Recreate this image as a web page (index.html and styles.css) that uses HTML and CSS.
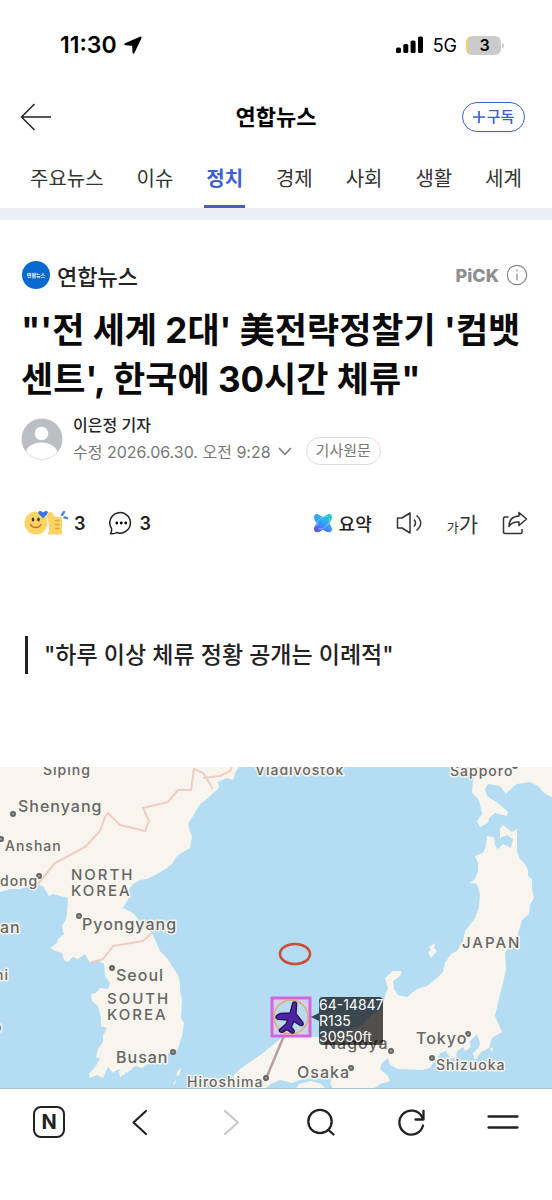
FILE: index.html
```html
<!DOCTYPE html>
<html lang="ko">
<head>
<meta charset="utf-8">
<meta name="viewport" content="width=device-width, initial-scale=1">
<title>연합뉴스</title>
<link rel="stylesheet" href="styles.css">
</head>
<body>
<div class="status">
  <div class="status-left">
    <span class="clock">11:30</span>
    <svg class="icon" width="18" height="18" viewBox="0 0 18 18"><path d="M16.500.6 1 7.300q-1.600 1 .2 2l7 .5.3 7q.7 1.600 1.900.1L17.600 2q.2-1.700-1.100-1.400z" fill="#000"/></svg>
  </div>
  <div class="status-right">
    <svg class="icon" width="28" height="18" viewBox="0 0 28 18"><rect x="0" y="11.500" width="5" height="5.500" rx="1.600"/><rect x="7.300" y="8" width="5" height="9" rx="1.600"/><rect x="14.600" y="4.500" width="5" height="12.500" rx="1.600"/><rect x="22" y="0.500" width="5" height="16.500" rx="1.600"/></svg>
    <span class="network">5G</span>
    <span class="battery">3</span>
  </div>
</div>

<header class="header">
  <button class="back" aria-label="뒤로"><svg class="icon" width="32" height="28" viewBox="0 0 32 28" fill="none" stroke="#222" stroke-width="1.500"><path d="M14.500 1 1.500 14l13 13M1.500 14H31"/></svg></button>
  <h2 class="header-title">연합뉴스</h2>
  <button class="subscribe"><svg class="icon" width="12" height="12" viewBox="0 0 12 12" stroke="#3c5fd0" stroke-width="1.700"><path d="M6 0v12M0 6h12"/></svg>구독</button>
</header>

<nav class="tabs">
  <a class="tab" href="#">주요뉴스</a>
  <a class="tab" href="#">이슈</a>
  <a class="tab tab-active" href="#">정치</a>
  <a class="tab" href="#">경제</a>
  <a class="tab" href="#">사회</a>
  <a class="tab" href="#">생활</a>
  <a class="tab" href="#">세계</a>
</nav>

<main>
  <article class="article">
    <div class="source">
      <span class="source-logo">연합뉴스</span>
      <span class="source-name">연합뉴스</span>
      <span class="pick">PiCK</span>
      <button aria-label="안내"><svg class="icon" width="22" height="22" viewBox="0 0 22 22" fill="none" stroke="#888" stroke-width="1.200"><circle cx="11" cy="11" r="9.700"/><path d="M11 9.500v7M11 5.500v1.700"/></svg></button>
    </div>
    <h1 class="headline">"'전 세계 2대' 美전략정찰기 '컴뱃<br>센트', 한국에 30시간 체류"</h1>
    <div class="byline">
      <svg class="icon" width="42" height="42" viewBox="0 0 42 42"><defs><clipPath id="face"><circle cx="21" cy="21" r="20"/></clipPath></defs><circle cx="21" cy="21" r="20.500" fill="#bbbec3"/><g clip-path="url(#face)" fill="#fff"><circle cx="20.500" cy="15.500" r="6.800"/><ellipse cx="20.500" cy="36" rx="16" ry="11.500"/></g></svg>
      <div class="byline-text">
        <div class="reporter">이은정 기자</div>
        <div class="date-row">
          <button class="date">수정 2026.06.30. 오전 9:28<svg class="icon" width="14" height="9" viewBox="0 0 14 9" fill="none" stroke="#777" stroke-width="1.500"><path d="m1 1 6 6.500L13 1"/></svg></button>
          <a class="original" href="#">기사원문</a>
        </div>
      </div>
    </div>
    <div class="actions">
      <button class="action">
        <svg class="icon" width="44" height="26" viewBox="0 0 44 26"><circle cx="12" cy="13" r="11.500" fill="#fcd466"/><ellipse cx="9" cy="9.500" rx="1.300" ry="2" fill="#433"/><ellipse cx="14.500" cy="9.500" rx="1.300" ry="2" fill="#433"/><path d="M6.500 14.500c2 4 8.500 4 10.500 0" fill="none" stroke="#c6732c" stroke-width="1.500" stroke-linecap="round"/><path d="m19 8.200-4.200-4.100C13 1.700 16 0 18 1.500l1 1 1.300-1c2-1.500 5 .2 3 2.600z" fill="#3a76e8"/><path d="M23.500 24.500c2-3 2-8 1-12C23.500 9 22.500 6 23.500 3.500q1.500-3 4.500-1c1.800 1.300 1.500 4 4 4.500h4.500q1.500 0 1.500 1.700V23q0 1.500-1.500 1.500z" fill="#fcd466"/><path d="M31 10.500h4.500M31 14.500h4.500M31 18.500h4.500" stroke="#e4a33c" stroke-width="1.300"/><path d="m38 5 2-3M40.500 7.500l3 .6" stroke="#4a86ec" stroke-width="2.400" stroke-linecap="round"/></svg>
        <span class="count">3</span>
      </button>
      <button class="action comments">
        <svg class="icon" width="24" height="24" viewBox="0 0 24 24"><path d="M2.500 17.500A10.300 10.300 0 1 1 7.500 21.500Q4.500 23.500 1.500 22.500 3 20.500 2.500 17.500z" fill="none" stroke="#222" stroke-width="1.500" stroke-linejoin="round"/><circle cx="7.800" cy="12" r="1.400"/><circle cx="12.300" cy="12" r="1.400"/><circle cx="16.800" cy="12" r="1.400"/></svg>
        <span class="count">3</span>
      </button>
      <button class="action summary">
        <svg class="icon" width="20" height="20" viewBox="0 0 20 20"><defs><linearGradient id="orb" gradientUnits="userSpaceOnUse" x1="15" y1="1" x2="5" y2="19"><stop offset="0" stop-color="#19d2c2"/><stop offset=".5" stop-color="#36a0ff"/><stop offset="1" stop-color="#6551ec"/></linearGradient></defs><g fill="url(#orb)"><path d="M3 1C7 0 19 11 19 16c0 4-4 4-7 2C7 15 1 8 1 4q0-2.500 2-3z"/><path d="M17 1C13 0 1 11 1 16c0 4 4 4 7 2 5-3 11-10 11-14q0-2.500-2-3z"/></g><path d="M4 13C2.500 8 9 2 15.500 3.500M5.500 15.500c5 2 12-5 11-10" fill="none" stroke="#8fd6ff" stroke-width=".7"/></svg>
        요약
      </button>
      <button class="action" aria-label="듣기"><svg class="icon" width="27" height="24" viewBox="0 0 27 24" fill="none" stroke="#333" stroke-width="1.500" stroke-linejoin="round"><path d="M1.500 7H6l8-5v20l-8-5H1.500zM18 8.500q3 3.500 0 7M20.500 4.500q8.500 7.500 0 15"/></svg></button>
      <button class="action type-size" aria-label="글자 크기"><span class="type-small">가</span><span class="type-large">가</span></button>
      <button class="action" aria-label="공유"><svg class="icon" width="26" height="24" viewBox="0 0 26 24" fill="none" stroke="#333" stroke-width="1.500" stroke-linejoin="round"><path d="M6.500 6H3Q1.500 6 1.500 7.500v13.500Q1.500 22.500 3 22.500h15.500q1.500 0 1.500-1.500v-3"/><path d="M17 1.500 24.500 8 17 14.500V11q-7-.5-10 4.500 0-10 10-10.500z"/></svg></button>
    </div>
    <blockquote class="quote">"하루 이상 체류 정황 공개는 이례적"</blockquote>
  </article>

  <svg class="map" viewBox="0 0 552 321">
    <rect width="552" height="321" fill="#b4dcf3"/>
    <g fill="#f8f5ee">
      <path d="M0 0H239L235 6 233 13 227 11 218 15 219 21 213 26 207 32 200 37 193 49 188 57 190 64 192 70 190 81 183 85 177 89 172 97 167 101 157 107 147 112 140 113 133 117 129 122 130 129 123 141 133 146 140 154 150 164 153 168 160 184 167 191 172 199 178 208 180 216 180 224 182 232 181 251 184 256 182 269 177 284 171 285 165 289 163 295 157 297 151 295 142 301 135 299 127 306 118 302 113 306 108 300 103 311 97 308 90 311 89 307 95 300 100 292 96 290 98 282 103 275 103 269 107 261 101 259 101 251 98 239 92 234 91 227 96 226 100 221 108 222 110 216 105 209 104 197 97 193 90 196 85 187 78 192 73 190 68 195 64 193 62 186 55 184 50 181 57 176 58 172 64 167 62 159 66 152 67 147 68 131 60 129 53 127 49 129 43 119 38 118 30 119 20 122 10 122 0 125z"/>
      <path d="M480 0 473 14 472 26 478 32 480 37 482 47 477 54 480 60 488 56 489 51 495 46 507 49 508 45 498 36 487 29 485 22 488 17 500 19 506 27 512 21 517 17 524 16 530 15 538 19 544 26 552 30V0z"/>
      <path d="M487 69 494 70 495 78 498 82 503 77 511 81 513 72 507 68 500 71 500 62 503 58 512 65 517 62 517 84 520 92 525 97 528 103 528 109 532 112 532 122 534 131 530 138 529 147 522 153 520 160 518 166 517 172 509 179 505 186 506 202 503 216 498 236 495 249 502 265 492 271 489 281 481 285 475 293 473 286 479 280 480 276 477 267 470 274 471 280 465 284 463 280 457 284 456 291 450 291 446 284 440 286 437 292 433 296 430 301 423 303 398 302 390 298 388 291 382 296 380 302 388 309 390 314 380 317 373 322H333L330 316 333 309 327 306 318 312 305 311 292 316 280 313 271 317 265 322H240L233 309 240 302 263 286 280 272 285 266 307 270 323 270 345 264 362 258 370 249 382 242 385 229 388 221 385 211 393 204 402 204 400 209 393 214 394 222 398 228 407 230 417 222 427 219 437 211 443 205 445 196 451 187 457 184 463 174 465 164 475 151 479 140 480 127 477 117 470 116 475 112 478 104 478 96 475 89 483 86 486 79z"/>
      <path d="M435 176 434 181 437 184 431 191 428 185 431 183 429 180z"/>
      <path d="M181 301l-1 6-3 3v-5zM176 311l-1 6-2 1zM299 317l12-3 10 3 5 5H296zM119 304l6-2v5l-5 3zM490 282l3-2-1 5z"/>
    </g>
    <g class="border"><path d="M38 117 55 96 85 80 100 64 105 50 108 46 120 58 145 64 149 54 143 41 168 35 178 23 191 23 194 2 203 6 213 22M203 11 220 9 230 4 232 0M90 196 103 192 113 179 143 174 152 166"/></g>
    <path d="M286 264 265 314" stroke="#b7a0a1" stroke-width="2.500"/>
    <g class="dot"><circle cx="13" cy="47" r="2"/><circle cx="1" cy="72" r="2"/><circle cx="39" cy="109" r="2"/><circle cx="79" cy="149" r="2"/><circle cx="112" cy="201" r="2"/><circle cx="173" cy="285" r="2"/><circle cx="266" cy="311" r="2"/><circle cx="391" cy="284" r="2"/><circle cx="351" cy="301" r="2"/><circle cx="468" cy="267" r="2"/><circle cx="432" cy="291" r="2"/><circle cx="515" cy="-1" r="2"/></g>
    <g class="place">
      <text x="43" y="8" class="town">Siping</text>
      <text x="18" y="45" class="city">Shenyang</text>
      <text x="5" y="84" class="town">Anshan</text>
      <text x="0" y="119" class="town">dong</text>
      <text x="0" y="166" class="city">an</text>
      <text x="-5" y="213" class="town">ni</text>
      <text x="-7" y="265" class="town">o</text>
      <text x="255" y="8" class="town">Vladivostok</text>
      <text x="450" y="9" class="town">Sapporo</text>
      <text x="71" y="113" class="country">NORTH</text>
      <text x="71" y="129" class="country">KOREA</text>
      <text x="82" y="163" class="city">Pyongyang</text>
      <text x="116" y="214" class="city">Seoul</text>
      <text x="107" y="237" class="country">SOUTH</text>
      <text x="107" y="253" class="country">KOREA</text>
      <text x="116" y="296" class="city">Busan</text>
      <text x="187" y="320" class="town">Hiroshima</text>
      <text x="297" y="311" class="city">Osaka</text>
      <text x="324" y="282" class="city">Nagoya</text>
      <text x="416" y="277" class="city">Tokyo</text>
      <text x="436" y="303" class="town">Shizuoka</text>
      <text x="462" y="181" class="country">JAPAN</text>
    </g>
    <ellipse cx="295" cy="187" rx="15" ry="10" fill="none" stroke="#c94f38" stroke-width="2.600"/>
    <rect x="272" y="231" width="38" height="38" fill="#e9c5ee" fill-opacity=".5" stroke="#d764df" stroke-width="3"/>
    <circle cx="291" cy="250" r="17" fill="#b9d9ef" stroke="#e5ac70" stroke-width="1.500"/>
    <path transform="translate(270 159) scale(.3333)" d="M69 229Q76 225 80 232L78 263 99 290Q102 300 92 299L72 286 64 303 73 315Q73 322 65 321L51 311 37 319Q27 320 28 311L47 295 54 282 24 280Q13 276 21 268L31 262 60 261z" fill="#5123a8" stroke="#20174f" stroke-width="4" stroke-linejoin="round"/>
    <path d="M323 230h56q4 0 4 4v40q0 4-4 4h-56q-4 0-4-4v-20l-8-4 8-4v-12q0-4 4-4z" fill-opacity=".68"/>
    <g class="flight"><text x="319" y="243">64-14847</text><text x="319" y="259">R135</text><text x="319" y="275">30950ft</text></g>
  </svg>
</main>

<nav class="toolbar">
  <button class="naver" aria-label="네이버">N</button>
  <button aria-label="이전"><svg class="icon" width="34" height="34" viewBox="0 0 34 34" fill="none" stroke="#222" stroke-width="2.200" stroke-linecap="round" stroke-linejoin="round"><path d="M23 6 10.500 17.500 23 29"/></svg></button>
  <button aria-label="다음" disabled><svg class="icon" width="34" height="34" viewBox="0 0 34 34" fill="none" stroke="#c8c8c8" stroke-width="2.200" stroke-linecap="round" stroke-linejoin="round"><path d="M11 6 24 17.500 11 29"/></svg></button>
  <button aria-label="검색"><svg class="icon" width="34" height="34" viewBox="0 0 34 34" fill="none" stroke="#222" stroke-width="2.300" stroke-linecap="round"><circle cx="16" cy="16.500" r="11.700"/><path d="m24.500 25 5 4.500"/></svg></button>
  <button aria-label="새로고침"><svg class="icon" width="34" height="34" viewBox="0 0 34 34" fill="none" stroke="#222" stroke-width="2.300" stroke-linecap="round" stroke-linejoin="round"><path d="M28 20.500A12 12 0 1 1 27 12M28.500 6V14.500H20.500"/></svg></button>
  <button aria-label="메뉴"><svg class="icon" width="34" height="34" viewBox="0 0 34 34" stroke="#222" stroke-width="2.300" stroke-linecap="round"><path d="M2.500 11.500h29M2.500 22.500h29"/></svg></button>
</nav>
</body>
</html>
```
FILE: styles.css
```css
* { box-sizing: border-box; }

body {
  margin: 0;
  background: #fff;
  color: #222;
  font-family: Inter, "Noto Sans CJK KR", sans-serif;
  font-size: 16px;
}

button {
  margin: 0;
  padding: 0;
  border: 0;
  background: none;
  color: inherit;
  font: inherit;
}

a { color: inherit; text-decoration: none; }

.icon { display: block; flex: none; }

.status {
  display: flex;
  justify-content: space-between;
  align-items: center;
  height: 90px;
  padding: 0 51px 0 60px;
  color: #000;
}

.status-left, .status-right { display: flex; align-items: center; gap: 7px; }
.status-right { gap: 9px; }
.clock { font-size: 23px; font-weight: 600; }
.network { font-size: 18px; }

.battery {
  position: relative;
  width: 35px;
  height: 19px;
  border-left: 2px solid #f0cf69;
  border-radius: 6px;
  background: #cbcbcb;
  font-size: 16px;
  font-weight: 600;
  line-height: 19px;
  text-align: center;
}

.battery::after {
  content: "";
  position: absolute;
  top: 7px;
  right: -3px;
  width: 2px;
  height: 5px;
  border-radius: 0 2px 2px 0;
  background: #cbcbcb;
}

.header {
  display: grid;
  grid-template-columns: 1fr auto 1fr;
  align-items: center;
  height: 54px;
  padding: 0 27px;
}

.back { justify-self: start; margin-left: -7px; }

.header-title {
  margin: 0;
  color: #000;
  font-size: 22px;
  line-height: 30px;
}

.subscribe {
  display: flex;
  align-items: center;
  justify-content: center;
  justify-self: end;
  gap: 2px;
  width: 63px;
  height: 30px;
  border: 1px solid #3c5fd0;
  border-radius: 15px;
  color: #3c5fd0;
  font-size: 15px;
  font-weight: 500;
  line-height: 26px;
}

.tabs {
  display: flex;
  justify-content: space-between;
  height: 76px;
  padding: 0 30px;
  border-bottom: 12px solid #ebeef5;
  color: #333;
  font-size: 20px;
}

.tab {
  height: 64px;
  padding-top: 20px;
  line-height: 30px;
}

.tab-active {
  margin: 0 -2px;
  padding-right: 2px;
  padding-left: 2px;
  border-bottom: 3px solid #4560be;
  color: #3c5fd0;
  font-weight: 700;
}

.article { padding: 39px 24px 93px 21px; }

.source { display: flex; align-items: center; gap: 7px; height: 32px; }

.source-logo {
  width: 28px;
  height: 28px;
  margin-left: 1px;
  border-radius: 50%;
  background: #0869cf;
  color: #fff;
  font-size: 5px;
  font-weight: 700;
  line-height: 28px;
  text-align: center;
}

.source-name { margin-right: auto; font-size: 22px; font-weight: 500; }
.pick { color: #8e8e8e; font-size: 18px; font-weight: 800; }

.headline {
  margin: 15px 0 9px;
  color: #0a0a0a;
  font-size: 35px;
  font-weight: 700;
  line-height: 49px;
}

.byline { display: flex; align-items: center; gap: 10px; }
.reporter { font-size: 16px; font-weight: 500; line-height: 24px; }
.date-row { display: flex; align-items: center; gap: 14px; height: 28px; }

.date {
  display: flex;
  align-items: center;
  gap: 7px;
  color: #777;
  font-size: 16px;
}

.original {
  padding: 0 9px;
  border: 1px solid #ddd;
  border-radius: 14px;
  color: #777;
  font-size: 15px;
  line-height: 26px;
}

.actions {
  display: flex;
  align-items: center;
  gap: 24px;
  height: 32px;
  margin-top: 42px;
  padding-left: 3px;
}

.action { display: flex; align-items: center; gap: 6px; }
.comments { margin-right: auto; }
.count { font-size: 18px; font-weight: 600; }
.summary { font-size: 18px; font-weight: 500; }
.type-size { align-items: baseline; gap: 0; color: #333; }
.type-small { font-size: 13px; }
.type-large { font-size: 21px; }

.quote {
  margin: 97px 0 0 4px;
  padding-left: 16px;
  border-left: 3px solid #222;
  font-size: 23px;
  font-weight: 500;
  line-height: 38px;
}

.map {
  display: block;
  width: 100%;
  border-bottom: 1px solid #a9c4d4;
}

.border path { fill: none; stroke: #efcdc5; stroke-width: 2; stroke-linejoin: round; }
.dot circle { fill: #aaa; stroke: #666; stroke-width: 2; }

.place text {
  fill: #666;
  stroke: #f8f5ee;
  stroke-width: 3px;
  stroke-linejoin: round;
  paint-order: stroke;
  font-weight: 500;
  letter-spacing: 1px;
}

.place .city { font-size: 16px; }
.place .town { font-size: 14px; }
.place .country { font-size: 15px; letter-spacing: 2px; }
.flight text { fill: #fff; font-size: 14px; }

.toolbar {
  display: flex;
  justify-content: space-between;
  padding: 16px 32px 63px;
}

.naver {
  width: 32px;
  height: 32px;
  margin: 1px;
  border: 2px solid #222;
  border-radius: 8px;
  font-size: 20px;
  font-weight: 700;
  line-height: 28px;
}
```
